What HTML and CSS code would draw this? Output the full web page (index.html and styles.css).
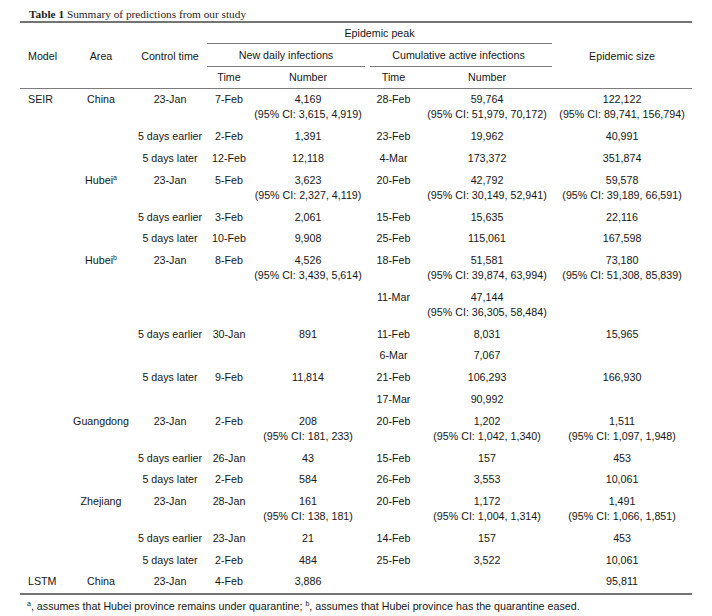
FILE: index.html
```html
<!DOCTYPE html>
<html lang="en">
<head>
<meta charset="utf-8">
<title>Table 1 Summary of predictions from our study</title>
<link rel="stylesheet" href="styles.css">
</head>
<body>
<div class="page">
  <div class="caption"><b>Table 1</b> Summary of predictions from our study</div>
  <table class="t">
    <colgroup>
      <col class="c-model"><col class="c-area"><col class="c-ctrl"><col class="c-time"><col class="c-num"><col class="c-ctime"><col class="c-cnum"><col class="c-size">
    </colgroup>
    <thead>
      <tr class="h1">
        <th rowspan="3" class="left span">Model</th>
        <th rowspan="3" class="span">Area</th>
        <th rowspan="3" class="span">Control time</th>
        <th colspan="4" class="peak">Epidemic peak</th>
        <th rowspan="3" class="span">Epidemic size</th>
      </tr>
      <tr class="h2">
        <th colspan="2">New daily infections</th>
        <th colspan="2" class="grp-r">Cumulative active infections</th>
      </tr>
      <tr class="h3">
        <th>Time</th><th>Number</th><th>Time</th><th>Number</th>
      </tr>
    </thead>
    <tbody>
      <tr><td class="left">SEIR</td><td>China</td><td>23-Jan</td><td>7-Feb</td><td>4,169<br>(95% CI: 3,615, 4,919)</td><td>28-Feb</td><td>59,764<br>(95% CI: 51,979, 70,172)</td><td>122,122<br>(95% CI: 89,741, 156,794)</td></tr>
      <tr><td></td><td></td><td>5 days earlier</td><td>2-Feb</td><td>1,391</td><td>23-Feb</td><td>19,962</td><td>40,991</td></tr>
      <tr><td></td><td></td><td>5 days later</td><td>12-Feb</td><td>12,118</td><td>4-Mar</td><td>173,372</td><td>351,874</td></tr>
      <tr><td></td><td>Hubei<sup>a</sup></td><td>23-Jan</td><td>5-Feb</td><td>3,623<br>(95% CI: 2,327, 4,119)</td><td>20-Feb</td><td>42,792<br>(95% CI: 30,149, 52,941)</td><td>59,578<br>(95% CI: 39,189, 66,591)</td></tr>
      <tr><td></td><td></td><td>5 days earlier</td><td>3-Feb</td><td>2,061</td><td>15-Feb</td><td>15,635</td><td>22,116</td></tr>
      <tr><td></td><td></td><td>5 days later</td><td>10-Feb</td><td>9,908</td><td>25-Feb</td><td>115,061</td><td>167,598</td></tr>
      <tr><td></td><td>Hubei<sup>b</sup></td><td>23-Jan</td><td>8-Feb</td><td>4,526<br>(95% CI: 3,439, 5,614)</td><td>18-Feb</td><td>51,581<br>(95% CI: 39,874, 63,994)</td><td>73,180<br>(95% CI: 51,308, 85,839)</td></tr>
      <tr><td></td><td></td><td></td><td></td><td></td><td>11-Mar</td><td>47,144<br>(95% CI: 36,305, 58,484)</td><td></td></tr>
      <tr><td></td><td></td><td>5 days earlier</td><td>30-Jan</td><td>891</td><td>11-Feb</td><td>8,031</td><td>15,965</td></tr>
      <tr><td></td><td></td><td></td><td></td><td></td><td>6-Mar</td><td>7,067</td><td></td></tr>
      <tr><td></td><td></td><td>5 days later</td><td>9-Feb</td><td>11,814</td><td>21-Feb</td><td>106,293</td><td>166,930</td></tr>
      <tr><td></td><td></td><td></td><td></td><td></td><td>17-Mar</td><td>90,992</td><td></td></tr>
      <tr><td></td><td>Guangdong</td><td>23-Jan</td><td>2-Feb</td><td>208<br>(95% CI: 181, 233)</td><td>20-Feb</td><td>1,202<br>(95% CI: 1,042, 1,340)</td><td>1,511<br>(95% CI: 1,097, 1,948)</td></tr>
      <tr><td></td><td></td><td>5 days earlier</td><td>26-Jan</td><td>43</td><td>15-Feb</td><td>157</td><td>453</td></tr>
      <tr><td></td><td></td><td>5 days later</td><td>2-Feb</td><td>584</td><td>26-Feb</td><td>3,553</td><td>10,061</td></tr>
      <tr><td></td><td>Zhejiang</td><td>23-Jan</td><td>28-Jan</td><td>161<br>(95% CI: 138, 181)</td><td>20-Feb</td><td>1,172<br>(95% CI: 1,004, 1,314)</td><td>1,491<br>(95% CI: 1,066, 1,851)</td></tr>
      <tr><td></td><td></td><td>5 days earlier</td><td>23-Jan</td><td>21</td><td>14-Feb</td><td>157</td><td>453</td></tr>
      <tr><td></td><td></td><td>5 days later</td><td>2-Feb</td><td>484</td><td>25-Feb</td><td>3,522</td><td>10,061</td></tr>
      <tr><td class="left">LSTM</td><td>China</td><td>23-Jan</td><td>4-Feb</td><td>3,886</td><td></td><td></td><td>95,811</td></tr>
    </tbody>
  </table>
  <div class="note"><sup>a</sup>, assumes that Hubei province remains under quarantine; <sup>b</sup>, assumes that Hubei province has the quarantine eased.</div>
</div>
</body>
</html>
```
FILE: styles.css
```css
html, body {
  margin: 0;
  padding: 0;
  background: #ffffff;
}

.page {
  padding: 7px 20px 0 20px;
  color: #161616;
  font-family: "Liberation Sans", Arial, sans-serif;
  font-size: 10.7px;
}

.caption {
  font-family: "Liberation Serif", "Times New Roman", serif;
  font-size: 11.3px;
  line-height: 14px;
  padding-left: 9px;
  color: #1e1e1e;
}

.caption b {
  font-weight: bold;
}

.t {
  width: 672px;
  table-layout: fixed;
  border-collapse: separate;
  border-spacing: 0;
  border-top: 2px solid #747474;
  border-bottom: 2px solid #747474;
}

.c-model { width: 49px; }
.c-area { width: 64px; }
.c-ctrl { width: 74px; }
.c-time { width: 44px; }
.c-num { width: 114px; }
.c-ctime { width: 57px; }
.c-cnum { width: 130px; }
.c-size { width: 140px; }

.t th {
  font-weight: normal;
  text-align: center;
  padding: 0;
  white-space: nowrap;
}

.t th.left,
.t td.left {
  text-align: left;
  padding-left: 8px;
}

.t th.span {
  vertical-align: middle;
  border-bottom: 1px solid #7c7c7c;
}

.h1 .peak {
  line-height: 20px;
  border-bottom: 1px solid #7c7c7c;
}

.h2 th {
  line-height: 22px;
  padding-bottom: 1px;
  background-image: linear-gradient(#7c7c7c, #7c7c7c);
  background-repeat: no-repeat;
  background-size: 100% 1px;
  background-position: left bottom;
}

.h2 th.grp-r {
  background-size: calc(100% - 5px) 1px;
  background-position: right bottom;
}

.h3 th {
  line-height: 21px;
  border-bottom: 1px solid #7c7c7c;
}

.t td {
  padding: 3.4px 0;
  line-height: 15px;
  text-align: center;
  vertical-align: top;
  white-space: nowrap;
}

sup {
  font-size: 7px;
  line-height: 0;
  vertical-align: 4px;
}

.note {
  margin-top: 4px;
  padding-left: 7px;
  line-height: 15px;
}
```
